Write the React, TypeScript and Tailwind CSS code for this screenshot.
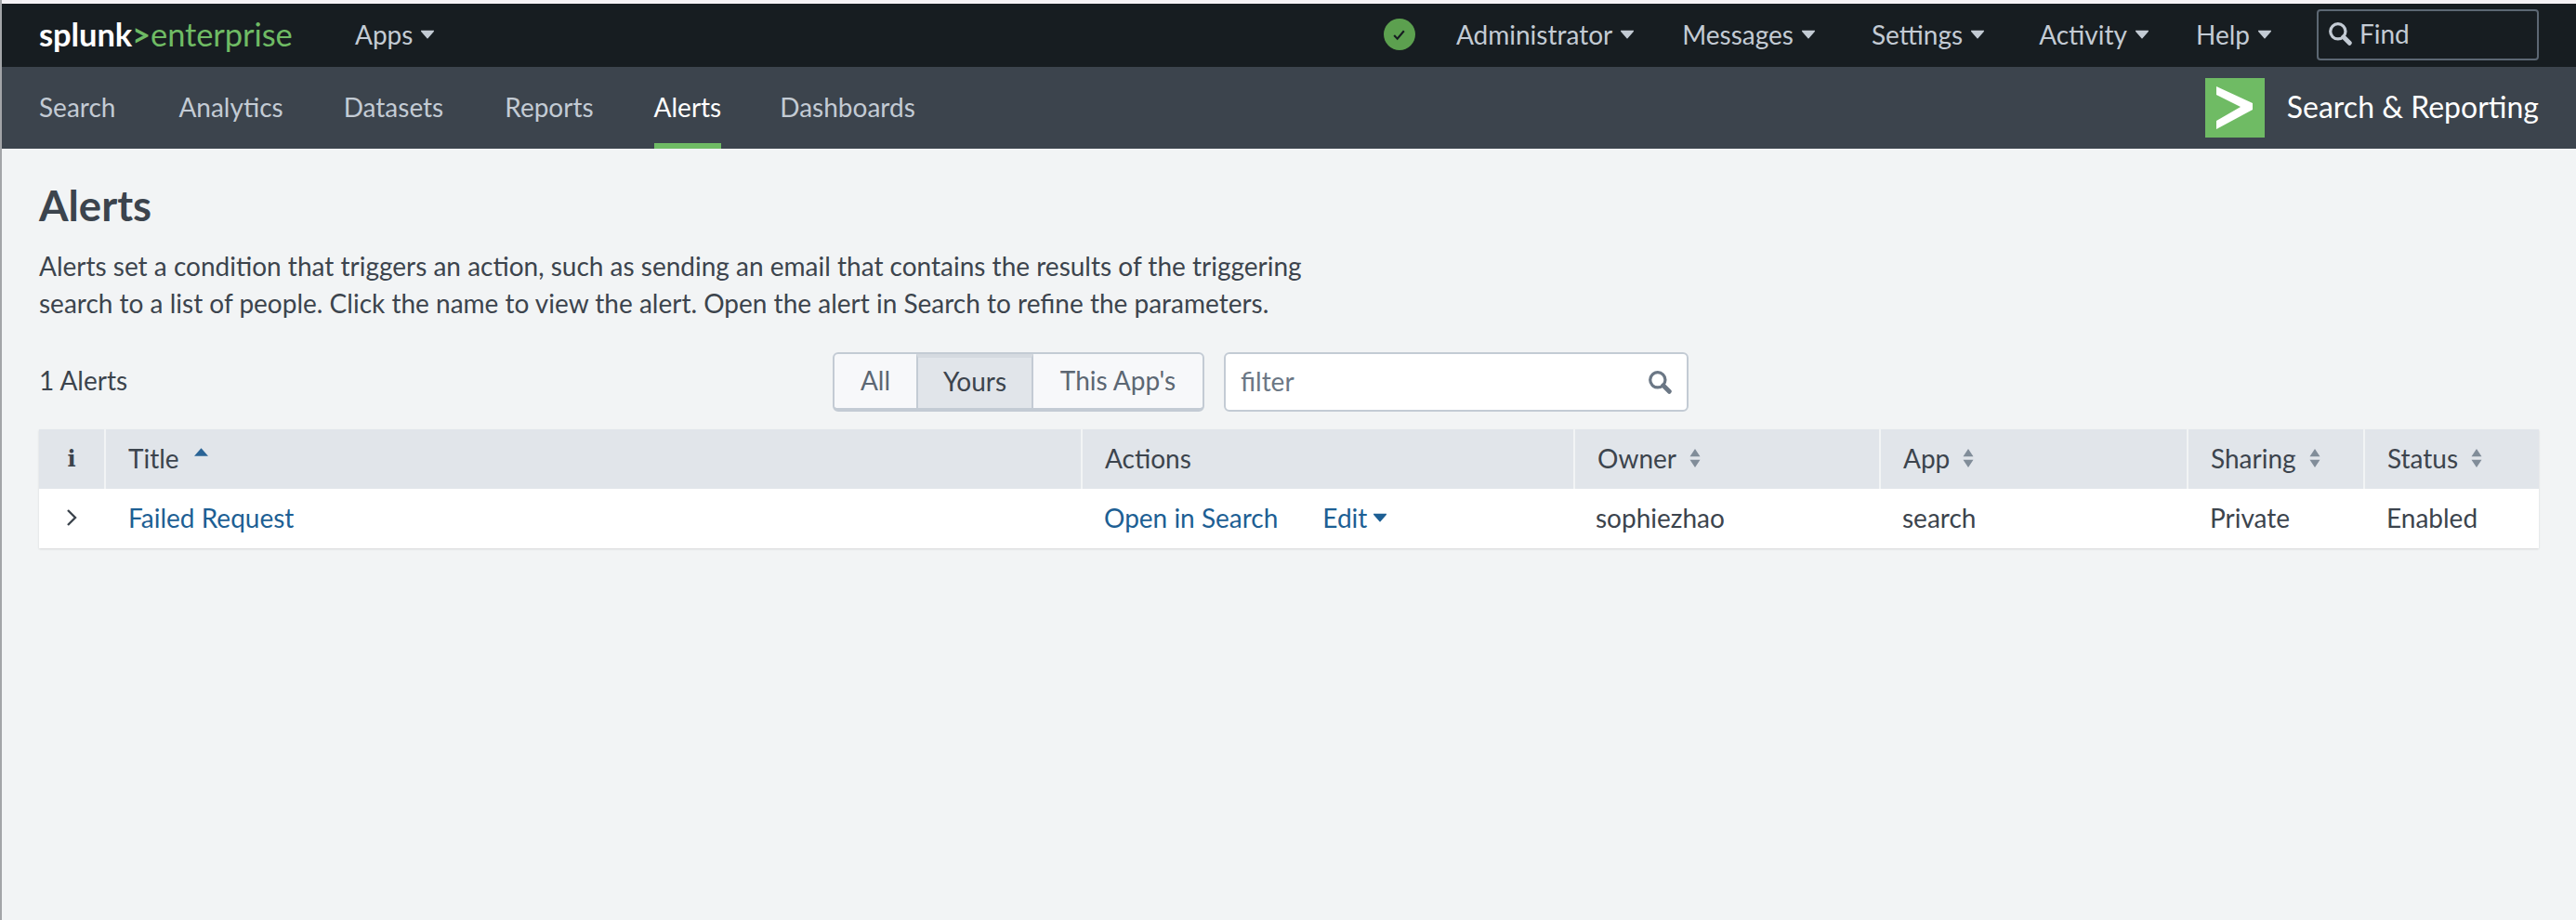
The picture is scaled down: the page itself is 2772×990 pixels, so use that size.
import React from 'react'

const Caret = ({ className }: { className: string }) => (
    <svg viewBox="0 0 12 8" className={`w-[16px] h-[10px] ${className}`} fill="currentColor">
        <path d="M1 .5h10a.6.6 0 0 1 .45 1L6.4 7.3a.55.55 0 0 1-.8 0L.55 1.5A.6.6 0 0 1 1 .5z" />
    </svg>
)

const SortIcon = () => (
    <svg viewBox="0 0 14 24" className="w-[16px] h-[22px] text-[#818d99]" fill="currentColor">
        <path d="M7 1l6 9H1zM7 23l-6-9h12z" />
    </svg>
)

const SearchIcon = ({ className }: { className: string }) => (
    <svg viewBox="0 0 24 24" className={className} fill="none" stroke="currentColor">
        <circle cx="10" cy="10" r="7.5" strokeWidth="3" />
        <path d="M15.5 15.5l6 6" strokeWidth="4.5" strokeLinecap="round" />
    </svg>
)

const TopItem = ({ label, className }: { label: string; className: string }) => (
    <div className={`flex items-center gap-[8px] ${className}`}>
        <span>{label}</span>
        <Caret className="text-[#c3cbd4]" />
    </div>
)

const AppLink = ({ label, active, className }: { label: string; active?: boolean; className: string }) => (
    <div className={`relative h-full flex items-center pb-[3px] ${active ? 'text-white' : 'text-[#c3cbd4]'} ${className}`}>
        {label}
        {active && <div className="absolute bottom-0 left-0 right-0 h-[6px] bg-[#6fbb64]" />}
    </div>
)

const HeaderCell = ({ label, className, sort = true }: { label: string; className: string; sort?: boolean }) => (
    <div className={`h-full bg-[#e1e5ea] flex items-center gap-[12px] pl-[24px] pb-[2px] ${className}`}>
        <span>{label}</span>
        {sort && <SortIcon />}
    </div>
)

const App = () => {
    return (
        <div className="w-[2772px] h-[990px] overflow-hidden bg-[#f2f4f5] border-l-2 border-[#a3a5a8] font-['Lato',sans-serif] text-[28px] text-[#3c444d]">
            <div className="h-[4px] bg-[#f5f2f5] -ml-[2px]" />

            {/* top bar */}
            <div className="h-[68px] bg-[#171d21] flex items-center pr-[40px] text-[#c3cbd4]">
                <div className="w-[380px] pl-[40px] pb-[2px] text-[34.5px] leading-none tracking-[-0.1px]">
                    <span className="text-white font-bold">splunk</span>
                    <span className="text-[#6fbb64] font-bold">&gt;</span>
                    <span className="text-[#6fbb64]">enterprise</span>
                </div>
                <div className="pb-[2px]">
                    <TopItem label="Apps" className="" />
                </div>
                <div className="ml-auto flex items-center pb-[2px]">
                    <div className="w-[34px] h-[34px] rounded-full bg-[#5ca04f] flex items-center justify-center mr-[44px]">
                        <svg viewBox="0 0 16 16" className="w-[17px] h-[17px] text-[#171d21]" fill="none" stroke="currentColor" strokeWidth="2">
                            <path d="M3 8.5l3.3 3.5L13 4" />
                        </svg>
                    </div>
                    <TopItem label="Administrator" className="mr-[51px]" />
                    <TopItem label="Messages" className="mr-[60px]" />
                    <TopItem label="Settings" className="mr-[58px]" />
                    <TopItem label="Activity" className="mr-[50px]" />
                    <TopItem label="Help" className="mr-[48px]" />
                    <div className="w-[239px] h-[55px] rounded-[4px] border-2 border-[#5c6773] flex items-center gap-[8px] pl-[10px] pb-[2px]">
                        <SearchIcon className="w-[26px] h-[26px] text-[#c3cbd4]" />
                        <span>Find</span>
                    </div>
                </div>
            </div>

            {/* app bar */}
            <div className="h-[88px] bg-[#3c444d] flex items-center pl-[40px] pr-[40px]">
                <AppLink label="Search" className="mr-[68px]" />
                <AppLink label="Analytics" className="mr-[65px]" />
                <AppLink label="Datasets" className="mr-[66px]" />
                <AppLink label="Reports" className="mr-[65px]" />
                <AppLink label="Alerts" active className="mr-[63px]" />
                <AppLink label="Dashboards" className="" />
                <div className="ml-auto flex items-center gap-[24px]">
                    <div className="w-[64px] h-[64px] bg-[#6fbb64] flex items-center justify-center">
                        <svg viewBox="0 0 64 64" className="w-[64px] h-[64px]" fill="#fff">
                            <path d="M12 9l39 18v7L12 55v-9l26-15L12 18z" />
                        </svg>
                    </div>
                    <span className="text-[32px] text-white pb-[2px]">Search &amp; Reporting</span>
                </div>
            </div>

            {/* page */}
            <div className="pl-[40px] pr-[40px]">
                <h1 className="mt-[35px] text-[45.5px] leading-[52px] font-bold">Alerts</h1>
                <p className="mt-[19px] w-[1400px] leading-[40px]">
                    Alerts set a condition that triggers an action, such as sending an email that contains the results of the triggering
                    <br />
                    search to a list of people. Click the name to view the alert. Open the alert in Search to refine the parameters.
                </p>

                <div className="mt-[33px] h-[64px] flex items-center">
                    <span className="w-[854px] pb-[4px]">1 Alerts</span>
                    <div className="h-[64px] flex rounded-[6px] border-2 border-[#c3cbd4] border-b-[4px] bg-[#f7f8fa] overflow-hidden text-[#5c6773]">
                        <div className="w-[88px] flex items-center justify-center pb-[2px]">All</div>
                        <div className="w-[126px] flex items-center justify-center bg-[#e1e5ea] border-x-2 border-x-[#c3cbd4] border-t-[4px] border-t-[#d5dae0] text-[#3c444d] pb-[4px]">Yours</div>
                        <div className="w-[182px] flex items-center justify-center pb-[2px]">This App's</div>
                    </div>
                    <div className="ml-[21px] w-[500px] h-[64px] bg-white rounded-[6px] border-2 border-[#c3cbd4] flex items-center justify-between pl-[16px] pr-[16px] text-[#6b7785]">
                        <span className="pb-[2px]">filter</span>
                        <SearchIcon className="w-[26px] h-[26px] text-[#6b7785]" />
                    </div>
                </div>

                {/* table */}
                <div className="mt-[19px] shadow-[0_1px_2px_rgba(0,0,0,0.12)]">
                    <div className="h-[64px] flex gap-[2px]">
                        <div className="w-[70px] h-full bg-[#e1e5ea] flex items-center justify-center font-['DejaVu_Serif',serif] font-bold text-[24px]">i</div>
                        <div className="w-[1049px] h-full bg-[#e1e5ea] flex items-center gap-[16px] pl-[24px] pb-[2px]">
                            <span>Title</span>
                            <svg viewBox="0 0 14 8" className="w-[15px] h-[9px] -mt-[14px] text-[#2a6496]" fill="currentColor">
                                <path d="M7 0l7 8H0z" />
                            </svg>
                        </div>
                        <HeaderCell label="Actions" className="w-[528px]" sort={false} />
                        <HeaderCell label="Owner" className="w-[327px]" />
                        <HeaderCell label="App" className="w-[329px]" />
                        <HeaderCell label="Sharing" className="w-[188px]" />
                        <HeaderCell label="Status" className="flex-1" />
                    </div>
                    <div className="h-[64px] bg-white flex items-center pb-[2px]">
                        <div className="w-[70px] flex justify-center">
                            <svg viewBox="0 0 12 20" className="w-[12px] h-[20px] text-[#3c444d]" fill="none" stroke="currentColor" strokeWidth="2.4">
                                <path d="M2 2l8 8-8 8" />
                            </svg>
                        </div>
                        <div className="w-[1053px] pl-[26px] text-[#1d5f94]">Failed Request</div>
                        <div className="w-[530px] pl-[23px] flex items-center text-[#1d5f94]">
                            <span className="mr-[48px]">Open in Search</span>
                            <span className="mr-[6px]">Edit</span>
                            <Caret className="text-[#1d5f94]" />
                        </div>
                        <div className="w-[329px] pl-[22px]">sophiezhao</div>
                        <div className="w-[331px] pl-[23px]">search</div>
                        <div className="w-[190px] pl-[23px]">Private</div>
                        <div className="flex-1 pl-[23px]">Enabled</div>
                    </div>
                </div>
            </div>
        </div>
    )
}

export default App
